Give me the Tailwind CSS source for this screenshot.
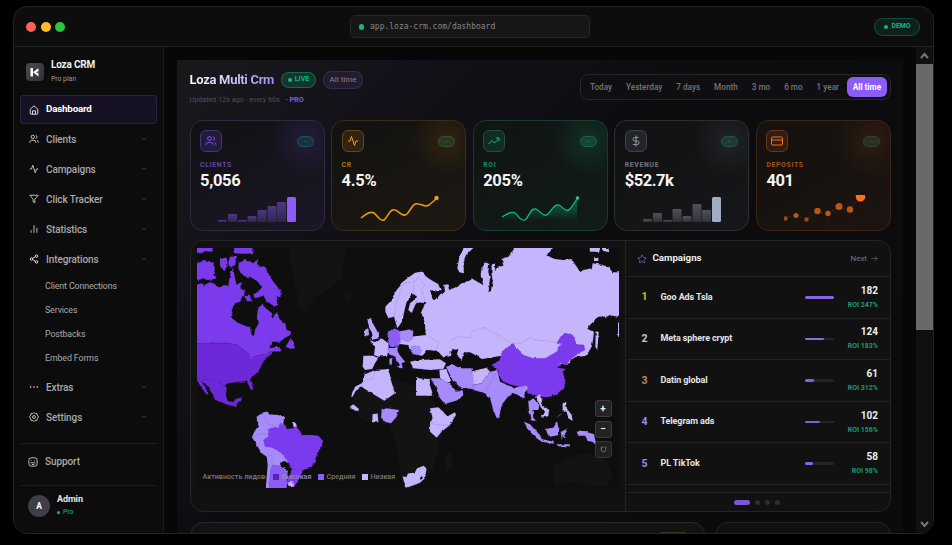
<!DOCTYPE html>
<html lang="en">
<head>
<meta charset="utf-8">
<title>Loza CRM</title>
<script src="https://cdn.jsdelivr.net/npm/@tailwindcss/browser@4"></script>
</head>
<body class="bg-black w-[952px] h-[545px] overflow-hidden pt-[6px] pl-[13px] font-['Roboto',sans-serif] text-white">
<svg class="hidden">
  <defs>
    <symbol id="down" viewBox="0 0 24 24"><path d="m5 8 7 7 7-7"/></symbol>
    <symbol id="up" viewBox="0 0 24 24"><path d="m5 16 7-7 7 7"/></symbol>
    <symbol id="users" viewBox="0 0 24 24"><path d="M16 21v-2a4 4 0 0 0-4-4H6a4 4 0 0 0-4 4v2M22 21v-2a4 4 0 0 0-3-3.87M16 3.13a4 4 0 0 1 0 7.75"/><circle cx="9" cy="7" r="4"/></symbol>
    <symbol id="pulse" viewBox="0 0 24 24"><path d="M22 12h-4l-3 9L9 3l-3 9H2"/></symbol>
  </defs>
</svg>
<div class="w-[921px] h-[528px] rounded-[14px] border border-[#232323] bg-[#0d0d0d] overflow-hidden flex flex-col">
  <header class="h-[40px] shrink-0 border-b border-[#222] flex items-center pl-[12px] pr-[13px]">
    <div class="flex gap-[4.5px] w-[324px]">
      <i class="size-[10px] rounded-full bg-[#ff5f57]"></i><i class="size-[10px] rounded-full bg-[#febc2e]"></i><i class="size-[10px] rounded-full bg-[#28c840]"></i>
    </div>
    <div class="w-[240px] h-[23px] rounded-[5px] border border-[#272727] bg-[#161616] flex items-center pl-[8px] gap-[6px]">
      <i class="w-[5px] h-[6px] rounded-full bg-[#10b981]"></i>
      <span class="font-['DejaVu_Sans_Mono',monospace] text-[8px] text-[#858585]">app.loza-crm.com/dashboard</span>
    </div>
    <div class="ml-auto w-[46px] h-[18px] rounded-full border border-[#10b981]/30 bg-[#10b981]/12 flex items-center justify-center gap-[4px] text-[6.8px] font-bold text-[#24b485]"><i class="size-[4px] rounded-full bg-[#10b981]"></i>DEMO</div>
  </header>
  <div class="flex flex-1 min-h-0">
    <aside class="w-[150px] shrink-0 border-r border-[#1b1b1b] bg-[#0c0c0c] px-[6px] flex flex-col text-[10px] tracking-[-.1px] font-medium text-[#a9a9ab]">
      <div class="h-[48px] flex items-center gap-[7px] pl-[6px] pt-[2px] shrink-0">
        <svg class="w-[18px] h-[18px]" viewBox="0 0 18 18"><defs><linearGradient id="lg" x1="0" y1="0" x2="1" y2="1"><stop stop-color="#4a4a4f"/><stop offset="1" stop-color="#303034"/></linearGradient></defs><rect width="18" height="18" rx="4" fill="url(#lg)"/><path d="M4.500 5h2.500v8.500H4.500zM12.500 5v8.500L7 9.200z" fill="#fff"/><path d="M10 9.200l2.500-1.200v2.400z" fill="#333"/></svg>
        <div><div class="text-[10px] leading-[14px] font-bold text-[#eee] tracking-[-.2px]">Loza CRM</div><div class="text-[7px] leading-[14px] font-normal text-[#9b9b9b]">Pro plan</div></div>
      </div>
      <nav class="flex flex-col shrink-0">
        <div class="h-[29px] rounded-[3px] border border-[#2b2145] bg-[#171223] flex items-center pl-[8px] gap-[7px] text-white font-bold text-[9.800px] tracking-[-.2px]"><svg class="size-[10px] fill-none stroke-current stroke-2" viewBox="0 0 24 24"><path d="M3 10 12 2l9 8v10a2 2 0 0 1-2 2H5a2 2 0 0 1-2-2zM8.500 22v-8h7v8"/></svg>Dashboard</div>
        <div class="h-[30px] flex items-center pl-[9px] pr-[10px] gap-[7px]"><svg class="size-[10px] fill-none stroke-[#ddd] stroke-2"><use href="#users"/></svg>Clients<svg class="size-[6px] ml-auto fill-none stroke-[#777] stroke-2"><use href="#down"/></svg></div>
        <div class="h-[30px] flex items-center pl-[9px] pr-[10px] gap-[7px]"><svg class="size-[10px] fill-none stroke-[#ddd] stroke-2"><use href="#pulse"/></svg>Campaigns<svg class="size-[6px] ml-auto fill-none stroke-[#777] stroke-2"><use href="#down"/></svg></div>
        <div class="h-[30px] flex items-center pl-[9px] pr-[10px] gap-[7px]"><svg class="size-[10px] fill-none stroke-[#ddd] stroke-2" viewBox="0 0 24 24"><path d="M22 3H2l8 9.460V19l4 2v-8.540z"/></svg>Click Tracker<svg class="size-[6px] ml-auto fill-none stroke-[#777] stroke-2"><use href="#down"/></svg></div>
        <div class="h-[30px] flex items-center pl-[9px] pr-[10px] gap-[7px]"><svg class="size-[10px] fill-none stroke-[#ddd] stroke-2" viewBox="0 0 24 24"><path d="M5 21v-6M12 21V3M19 21V9"/></svg>Statistics<svg class="size-[6px] ml-auto fill-none stroke-[#777] stroke-2"><use href="#down"/></svg></div>
        <div class="h-[30px] flex items-center pl-[9px] pr-[10px] gap-[7px]"><svg class="size-[10px] fill-none stroke-[#ddd] stroke-[2.4]" viewBox="0 0 24 24"><circle cx="18" cy="5" r="3"/><circle cx="6" cy="12" r="3"/><circle cx="18" cy="19" r="3"/><path d="m8.600 13.500 6.800 4M15.400 6.500l-6.800 4"/></svg>Integrations<svg class="size-[6px] ml-auto fill-none stroke-[#777] stroke-2"><use href="#up"/></svg></div>
        <div class="flex flex-col text-[8.800px] font-normal leading-[24px] pl-[25px] pb-[2px]"><span>Client Connections</span><span>Services</span><span>Postbacks</span><span>Embed Forms</span></div>
        <div class="h-[30px] flex items-center pl-[9px] pr-[10px] gap-[7px]"><svg class="size-[10px] fill-[#ddd]" viewBox="0 0 24 24"><circle cx="4" cy="12" r="2"/><circle cx="12" cy="12" r="2"/><circle cx="20" cy="12" r="2"/></svg>Extras<svg class="size-[6px] ml-auto fill-none stroke-[#777] stroke-2"><use href="#down"/></svg></div>
        <div class="h-[30px] flex items-center pl-[9px] pr-[10px] gap-[7px]"><svg class="size-[10px] fill-none stroke-[#ddd] stroke-2" viewBox="0 0 24 24"><circle cx="12" cy="12" r="3.500"/><path d="m12 1 3 3 4-.5.7 4L23 12l-3.300 4.500-.7 4-4-.5-3 3-3-3-4 .5-.7-4L1 12l3.300-4.500.7-4 4 .5z"/></svg>Settings<svg class="size-[6px] ml-auto fill-none stroke-[#777] stroke-2"><use href="#down"/></svg></div>
      </nav>
      <div class="mt-[11px] h-[43px] shrink-0 border-y border-[#1b1b1b] flex items-center pl-[8px] gap-[7px] pb-[6px]"><svg class="size-[10px] fill-none stroke-[#ddd] stroke-2" viewBox="0 0 24 24"><rect x="2" y="2" width="20" height="20" rx="6"/><path d="M8 8v2M16 8v2M6 14h12M9 18h6"/></svg>Support</div>
      <div class="flex items-center gap-[7px] pl-[8px] pt-[7px]"><div class="size-[22px] rounded-full bg-[#3f3d46] flex items-center justify-center text-[8.500px] font-bold text-white">A</div><div class="pb-px"><div class="text-[9px] leading-[13px] font-bold text-[#e5e5e5]">Admin</div><div class="text-[7px] leading-[12px] font-normal text-[#10b981] flex items-center gap-[3px]"><i class="size-[3px] rounded-full bg-[#10b981]"></i>Pro</div></div></div>
    </aside>
    <main class="flex-1 bg-[#070707] pl-[13px] pt-[13px] min-w-0 flex">
      <div class="w-[726px] shrink-0 pl-[12.500px] pr-[12px] pt-[9px] bg-[linear-gradient(135deg,#19191c_0%,#13121a_20%,#0c0c0f_45%,#0b0b0d_100%)]">
        <div class="flex justify-between h-[51px]">
          <div>
            <div class="flex items-center h-[21px]">
              <h1 class="w-[91.500px] whitespace-nowrap text-[13px] tracking-[-.3px] font-bold"><span class="bg-gradient-to-r from-white to-[#a78bfa] bg-clip-text text-transparent">Loza Multi Crm</span></h1>
              <div class="w-[35px] h-[16px] rounded-full border border-[#10b981]/40 bg-[#10b981]/20 flex items-center justify-center gap-[3px] text-[7px] font-bold text-[#10b981]"><i class="size-[4px] rounded-full bg-[#10b981]"></i>LIVE</div>
              <div class="ml-[7px] w-[40px] h-[18px] rounded-[8px] border border-[#332d48] bg-[#211d2e] flex items-center justify-center text-[8px] text-[#85828e]">All time</div>
            </div>
            <div class="text-[7.200px] leading-[11px] mt-[4px] text-[#505055] flex"><span class="w-[96px] whitespace-nowrap">Updated 12s ago · every 60s</span><span class="text-[#7c5af0] font-bold">· PRO</span></div>
          </div>
          <div class="mt-[5px] h-[26px] w-[311px] rounded-[8px] border border-[#27272a] bg-[#0f0f11] flex items-center pl-[9px] pr-[3px] justify-between text-[8.200px] font-medium text-[#747478]">
            <span>Today</span><span>Yesterday</span><span>7 days</span><span>Month</span><span>3 mo</span><span>6 mo</span><span>1 year</span><span class="w-[40px] h-[20px] -ml-[6px] rounded-[6px] bg-[#8b5cf6] text-white font-bold flex items-center justify-center">All time</span>
          </div>
        </div>
        <section class="grid grid-cols-5 gap-[6.500px] h-[111px]">
          <div class="overflow-hidden rounded-[13px] border border-[#302940] bg-[radial-gradient(circle_at_86%_18%,#231d3a_0,transparent_24%),linear-gradient(150deg,#111114,#1b1726)] pl-[9.500px] pt-[9px] flex flex-col">
            <div class="flex items-center"><div class="size-[22px] rounded-[6px] border border-[#45366f] bg-[#231a3d] flex items-center justify-center"><svg class="size-[12px] fill-none stroke-[#8b5cf6] stroke-[1.700]"><use href="#users"/></svg></div><div class="ml-auto mr-[10px] w-[17px] h-[11px] rounded-full border border-[#235461] bg-[#19313f] flex items-center justify-center"><svg class="size-[5px] fill-none stroke-[#3f947f] stroke-2"><use href="#up"/></svg></div></div>
            <div class="mt-[8px] text-[6.800px] leading-[10px] font-bold tracking-[.7px] text-[#69479f]">CLIENTS</div><div class="text-[16.500px] leading-[22px] tracking-[-.3px] font-bold text-[#f4f4f5]">5,056</div>
            <svg class="w-[90px] h-[28px] ml-[18px] mt-[3px]" viewBox="0 0 90 28"><defs><linearGradient id="pb" x2="0" y2="1"><stop stop-color="#4e3786"/><stop offset="1" stop-color="#30244f"/></linearGradient></defs><g fill="url(#pb)"><rect x="0" y="25" width="9" height="2" rx="1"/><rect x="10" y="19" width="9" height="8" rx="1"/><rect x="20" y="25" width="9" height="2" rx="1"/><rect x="29.500" y="21" width="9" height="6" rx="1"/><rect x="39.500" y="15" width="9" height="12" rx="1"/><rect x="49.500" y="11" width="9" height="16" rx="1"/><rect x="59" y="7" width="9" height="20" rx="1"/></g><rect x="69" y="2" width="9" height="25" rx="1.500" fill="#8b5cf6"/></svg>
          </div>
          <div class="overflow-hidden rounded-[13px] border border-[#3b2c14] bg-[radial-gradient(circle_at_86%_18%,#30220f_0,transparent_24%),linear-gradient(150deg,#131211,#1d1812)] pl-[9.500px] pt-[9px] flex flex-col">
            <div class="flex items-center"><div class="size-[22px] rounded-[6px] border border-[#66471b] bg-[#302313] flex items-center justify-center"><svg class="size-[12px] fill-none stroke-[#f5a21b] stroke-2"><use href="#pulse"/></svg></div><div class="ml-auto mr-[10px] w-[17px] h-[11px] rounded-full border border-[#365333] bg-[#2b371f] flex items-center justify-center"><svg class="size-[5px] fill-none stroke-[#569058] stroke-2"><use href="#up"/></svg></div></div>
            <div class="mt-[8px] text-[6.800px] leading-[10px] font-bold tracking-[.7px] text-[#ad750e]">CR</div><div class="text-[16.500px] leading-[22px] tracking-[-.3px] font-bold text-[#f4f4f5]">4.5%</div>
            <svg class="w-[90px] h-[30px] ml-[18px] mt-[1px] fill-none" viewBox="0 0 90 30"><path d="M1 25C6 21 10 18 14 20 17 22 20 29 24 27 28 24 30 15 35 17 39 18 43 25 47 21 51 17 53 9 58 11 62 11 65 15 69 12L76 6" stroke="#e9980e" stroke-width="1.600"/><circle cx="76.500" cy="5" r="2.200" fill="#f59e0b"/></svg>
          </div>
          <div class="overflow-hidden rounded-[13px] border border-[#163d30] bg-[radial-gradient(circle_at_86%_18%,#103126_0,transparent_24%),linear-gradient(150deg,#101412,#111c18)] pl-[9.500px] pt-[9px] flex flex-col">
            <div class="flex items-center"><div class="size-[22px] rounded-[6px] border border-[#1b513f] bg-[#122c24] flex items-center justify-center"><svg class="size-[12px] fill-none stroke-[#19b981] stroke-2" viewBox="0 0 24 24"><path d="m1 18 7-7 5 5 9-9M16 6h6v6"/></svg></div><div class="ml-auto mr-[10px] w-[17px] h-[11px] rounded-full border border-[#1a6349] bg-[#144533] flex items-center justify-center"><svg class="size-[5px] fill-none stroke-[#2cbb86] stroke-2"><use href="#up"/></svg></div></div>
            <div class="mt-[8px] text-[6.800px] leading-[10px] font-bold tracking-[.7px] text-[#128f67]">ROI</div><div class="text-[16.500px] leading-[22px] tracking-[-.3px] font-bold text-[#f4f4f5]">205%</div>
            <svg class="w-[90px] h-[30px] ml-[18px] mt-[1px] fill-none" viewBox="0 0 90 30"><defs><linearGradient id="ga" x2="0" y2="1"><stop stop-color="#10b981" stop-opacity=".5"/><stop offset="1" stop-color="#10b981" stop-opacity="0"/></linearGradient></defs><path d="M1 24C6 21 10 18 14 20 17 22 20 29 24 27 28 24 30 14 35 16 39 18 43 25 47 21 51 17 53 11 58 12 62 14 65 20 69 16L76 6V28H1Z" fill="url(#ga)"/><path d="M1 24C6 21 10 18 14 20 17 22 20 29 24 27 28 24 30 14 35 16 39 18 43 25 47 21 51 17 53 11 58 12 62 14 65 20 69 16L76 6" stroke="#16b981" stroke-width="1.200"/><circle cx="76.500" cy="5" r="1.800" fill="#24cf94"/></svg>
          </div>
          <div class="overflow-hidden rounded-[13px] border border-[#2c2e31] bg-[radial-gradient(circle_at_86%_18%,#202327_0,transparent_24%),linear-gradient(150deg,#111113,#16171a)] pl-[9.500px] pt-[9px] flex flex-col">
            <div class="flex items-center"><div class="size-[22px] rounded-[6px] border border-[#3e4147] bg-[#222429] flex items-center justify-center"><svg class="size-[12px] fill-none stroke-[#8e96a5] stroke-2" viewBox="0 0 24 24"><path d="M12 1v22M17 5H9.500a3.500 3.500 0 0 0 0 7h5a3.500 3.500 0 0 1 0 7H6"/></svg></div><div class="ml-auto mr-[10px] w-[17px] h-[11px] rounded-full border border-[#25543f] bg-[#203a31] flex items-center justify-center"><svg class="size-[5px] fill-none stroke-[#48a57d] stroke-2"><use href="#up"/></svg></div></div>
            <div class="mt-[8px] text-[6.800px] leading-[10px] font-bold tracking-[.7px] text-[#737984]">REVENUE</div><div class="text-[16.500px] leading-[22px] tracking-[-.5px] font-bold text-[#f4f4f5]">$52.7k</div>
            <svg class="w-[90px] h-[28px] ml-[18px] mt-[3px]" viewBox="0 0 90 28"><defs><linearGradient id="gb" x2="0" y2="1"><stop stop-color="#505259"/><stop offset="1" stop-color="#303238"/></linearGradient></defs><g fill="url(#gb)"><rect x="0" y="24" width="9" height="3" rx="1"/><rect x="10" y="18" width="9" height="9" rx="1"/><rect x="20" y="25" width="9" height="2" rx="1"/><rect x="29.500" y="14" width="9" height="13" rx="1"/><rect x="39.500" y="21" width="9" height="6" rx="1"/><rect x="49.500" y="9" width="9" height="18" rx="1"/><rect x="59" y="15" width="9" height="12" rx="1"/></g><rect x="69" y="2" width="9" height="25" rx="1.500" fill="#a1acc2"/></svg>
          </div>
          <div class="overflow-hidden rounded-[13px] border border-[#3a2517] bg-[radial-gradient(circle_at_86%_18%,#2e1c10_0,transparent_24%),linear-gradient(150deg,#14110f,#1c1410)] pl-[9.500px] pt-[9px] flex flex-col">
            <div class="flex items-center"><div class="size-[22px] rounded-[6px] border border-[#6b3717] bg-[#301c10] flex items-center justify-center"><svg class="size-[12px] fill-none stroke-[#f97316] stroke-2" viewBox="0 0 24 24"><rect x="1" y="4" width="22" height="16" rx="2"/><path d="M1 10h22"/></svg></div><div class="ml-auto mr-[10px] w-[17px] h-[11px] rounded-full border border-[#37432f] bg-[#29301f] flex items-center justify-center"><svg class="size-[5px] fill-none stroke-[#568850] stroke-2"><use href="#up"/></svg></div></div>
            <div class="mt-[8px] text-[6.800px] leading-[10px] font-bold tracking-[.7px] text-[#aa5114]">DEPOSITS</div><div class="text-[16.500px] leading-[22px] tracking-[-.4px] font-bold text-[#f4f4f5]">401</div>
            <svg class="w-[90px] h-[28px] ml-[18px] mt-[3px]" viewBox="0 0 90 28"><path d="M1 23 12 20 22 24 33 16 43 19 54 12 65 15 76 3" fill="none" stroke="#6c3516" stroke-width=".6" stroke-dasharray="2 2"/><g fill="#b85816"><circle cx="1.500" cy="23.500" r="2.200" opacity=".8"/><circle cx="12" cy="20.500" r="2.500"/><circle cx="22.500" cy="24.500" r="2.200" opacity=".8"/><circle cx="33.500" cy="16" r="3.200"/><circle cx="44" cy="18.500" r="2.700"/><circle cx="55" cy="11.500" r="3.500"/><circle cx="66" cy="14.500" r="3.200"/></g><path d="M72 0h9q1 3-1 5-3 3-6.500.4Q71 3 72 0Z" fill="#f97316"/></svg>
          </div>
        </section>
        <section class="mt-[9px] h-[272px] rounded-[13px] border border-[#242426] bg-[#111112] flex overflow-hidden">
          <div class="relative w-[435px] shrink-0 pt-[7px] pl-[6px] border-r border-[#222224]">
            <svg class="w-[422px] h-[240px]" viewBox="197 248 422 240">
              <defs><filter id="coast" x="0" y="0" width="1" height="1" filterUnits="objectBoundingBox" color-interpolation-filters="sRGB"><feTurbulence type="fractalNoise" baseFrequency=".2" numOctaves="2" seed="4" result="n"/><feDisplacementMap in="SourceGraphic" in2="n" scale="2.800" xChannelSelector="R" yChannelSelector="G"/></filter></defs>
              <rect x="197" y="248" width="422" height="240" fill="#0e0e0f"/>
              <g fill="#131314">
                <path transform="translate(185 235) scale(.33333)" d="M310 39H485L470 130 420 170 385 190 365 235 345 220 330 150ZM470 175 495 165 510 185 485 200Z"/>
                <path transform="translate(390 235) scale(.33333)" d="M-90 450 0 430 70 450 125 490 165 560 145 640 130 700 60 745 35 740 20 640 0 570-80 560-120 510ZM165 660 190 650 185 700 165 710ZM490 690 520 675 560 660 620 655 650 680 670 720 650 755 590 750 550 740 495 755Z"/>
              </g>
              <g stroke="#5b3aa6" stroke-opacity=".7" stroke-width=".7" stroke-linejoin="round" filter="url(#coast)">
                <g transform="translate(185 235) scale(.33333)">
                  <path fill="#7c3aed" d="M20 153 50 145 58 150 75 142 88 146 100 155 115 150 130 152 135 120 144 100 150 130 155 150 172 138 165 160 180 165 176 185 165 200 150 205 140 225 138 245 155 262 180 272 195 278 200 300 207 303 210 285 218 270 216 245 218 225 230 208 245 222 258 232 262 248 275 232 285 255 300 265 305 285 318 290 316 300 300 308 285 320 265 320 252 335 258 340 275 333 290 345 270 352 258 348 240 358 215 362 195 372 190 355 170 340 155 330 130 325 20 325ZM302 335 312 318 318 308 325 325 330 340 318 342ZM20 30H85L80 50 60 48 50 55 20 52ZM145 30H205V55L180 56 150 55ZM20 85 60 75 85 85 90 110 85 120 95 130 70 135 55 130 40 135 20 130ZM105 70 125 68 128 90 118 108 105 95ZM135 65 155 65 150 90 135 98 130 85ZM162 80 180 72 205 85 220 75 215 90 240 95 255 125 265 140 285 165 288 180 275 185 280 205 268 215 255 205 245 200 235 180 225 185 210 190 205 178 220 170 232 155 215 140 200 125 185 125 170 120 160 100ZM178 185 190 178 202 200 185 198Z"/>
                  <path fill="#6d28d9" d="M20 325H130L155 330 170 340 190 355 195 372 215 362 240 358 258 348 262 355 245 368 235 380 228 395 222 405 215 415 200 425 195 435 205 460 198 465 190 448 185 438 160 440 130 445 118 452 105 445 85 435 20 430Z"/>
                  <path fill="#6d28d9" d="M36 430 50 432 85 435 105 445 118 452 125 460 122 480 128 498 145 502 155 488 172 485 168 498 155 505 155 515 130 510 110 502 90 495 85 480 75 465 60 445 50 438 70 475 66 480 50 460 36 435Z"/>
                  <path fill="#a78bfa" d="M215 545 235 532 245 530 250 538 280 540 297 545 295 570 300 640 310 690 300 790H240L248 690 245 665 230 655 215 630 200 605 208 590 218 575Z"/>
                  <path fill="#c4b5fd" stroke="none" d="M323 562 333 562 336 577 326 577Z"/>
                  <path fill="#7c3aed" d="M250 582 270 575 280 580 285 565 300 570 305 582 325 580 335 572 345 590 350 600 370 600 400 602 414 615 410 635 395 655 392 680 380 695 355 705 345 725 328 755 305 740 318 712 322 700 310 690 300 668 285 650 258 637 240 635 235 615 250 605Z"/>
                  <path fill="#8b5cf6" d="M262 690 285 692 305 712 305 790H250L256 705Z"/>
                  <path fill="#0e0e0f" stroke="none" d="M285 685 300 678 320 695 318 712 300 702 288 695Z"/>
                  <path fill="#c4b5fd" d="M307 740 325 738 327 755 312 756Z"/>
                  <path fill="none" d="M240 545 245 565 265 570 262 582M202 605 230 595 250 598M245 665 260 660 262 690"/>
                  <path fill="#b8a4fc" stroke="none" d="M547 255 558 248 562 262 572 280 582 300 582 310 555 316 563 300 555 285ZM540 285 550 278 552 300 538 305Z"/>
                  <path fill="#c4b5fd" d="M555 320 575 320 590 310 610 325 612 345 605 362 580 365 567 360 570 335ZM535 362 565 362 580 370 570 385 562 402 540 405 533 395ZM535 420 570 405 612 402 616 430 630 475 598 497 560 475 530 455 512 468 503 485 498 485 510 455 530 445ZM495 515 505 508 522 522 520 528 498 525ZM562 538 578 535 580 562 563 562Z"/>
                  <path fill="#8b5cf6" d="M608 295 625 280 645 288 648 325 635 335 612 330Z"/>
                  <path fill="#a78bfa" d="M608 340 635 337 640 355 660 380 650 385 653 400 635 398 645 390 628 365 612 358ZM613 372 622 368 620 390 613 388ZM590 525 605 520 642 525 635 545 618 565 598 560 588 550Z"/>
                  <path fill="none" d="M570 405 565 430 535 440 530 455"/>
                </g>
                <g transform="translate(390 235) scale(.33333)">
                  <path fill="#c4b5fd" d="M-14 215 0 200 20 165 45 135 75 113 95 110 115 130 145 148 152 165 145 172 120 165 128 185 140 190 150 178 165 170 162 150 172 148 178 165 200 155 215 145 240 140 245 130 262 140 280 150 272 120 275 95 285 82 298 85 295 110 300 130 297 160 295 172 303 165 308 140 304 110 305 92 315 85 315 105 325 95 340 92 335 72 355 65 370 45 375 25H500L470 62 495 72 520 75 545 72 560 95 570 112 580 105 605 100 608 85 640 90 655 95 668 112 705 112V230L680 245 660 240 650 245 625 245 600 270 592 282 612 290 610 310 605 335 590 360 575 370 500 400 330 400 335 362 300 368 275 372 265 365 240 352 222 352 215 375 200 360 205 342 190 345 178 350 185 362 160 368 145 350 120 345 110 360 95 362 70 358 50 330 20 325 25 312 60 305 90 302 108 300 98 270 90 240 105 205 80 200 65 235 45 240 35 262 22 280 12 245-5 250-14 230Z"/>
                  <path fill="#0e0e0f" stroke="none" d="M65 177 78 180 75 193 60 205 55 225 70 238 95 235 105 265 106 300 75 300 45 282 38 255 45 220 50 200ZM122 170 150 176 142 190 130 196ZM70 355 95 365 112 345 145 352 165 372 95 378 68 372Z"/>
                  <path fill="#c4b5fd" stroke="none" d="M202 100 208 65 225 30 250 39 228 60 220 85 222 115 208 112ZM598 30H632L628 50 600 50ZM635 35 655 40 658 52 640 48ZM612 70 625 68 625 78 612 78ZM617 285 626 292 622 345 616 335ZM684 262 705 270 705 305 684 305Z"/>
                  <path fill="#c4b5fd" d="M60 380 85 375 150 373 168 385 160 402 120 405 90 402 70 400ZM78 430 120 432 118 445 130 482 78 482ZM148 405 168 402 185 440 165 445 150 425ZM240 410 290 398 300 410 275 445 250 450ZM120 520 145 517 160 530 170 545 195 532 198 540 180 570 155 590 140 608 120 590 120 565 128 550ZM38 725 50 725 55 712 75 715 82 700 100 692 110 700 105 730 88 745 50 758 42 740Z"/>
                  <path fill="#0e0e0f" stroke="none" d="M88 727 95 722 99 729 92 735Z"/>
                  <path fill="#a78bfa" d="M28 290 55 283 70 288 68 312 55 320 28 312ZM62 335 85 330 95 345 88 360 70 358ZM168 395 185 390 215 400 245 400 250 445 250 463 215 458 190 440ZM122 430 150 430 180 447 200 470 218 465 220 480 205 495 165 507 150 490 138 460ZM250 450 275 445 300 410 322 405 330 440 365 455 372 460 405 448 420 458 405 475 398 495 385 480 370 475 350 490 335 510 328 545 320 550 310 525 300 490 285 475 250 465Z"/>
                  <path fill="#8b5cf6" stroke="none" d="M-7 295 10 280 28 288 32 320 18 335-4 330Z"/>
                  <path fill="#7c3aed" d="M370 325 383 345 400 360 430 370 465 370 500 350 505 335 515 330 500 325 515 300 530 292 548 300 560 328 582 330 585 345 560 360 540 375 525 395 508 385 512 395 530 400 518 410 527 440 520 460 500 478 480 485 465 487 450 483 435 480 415 475 412 450 390 455 365 450 340 440 325 420 325 405 305 390 330 375 335 350 355 335Z"/>
                  <path fill="#0e0e0f" stroke="none" d="M500 396 520 388 534 394 528 402 508 400ZM540 378 556 366 592 362 580 376 560 400 542 398Z"/>
                  <path fill="#a78bfa" stroke="none" d="M415 500 430 490 448 510 445 525 428 525 430 548 440 560 425 555 417 525ZM402 560 420 568 450 600 455 612 490 620 492 626 455 620 440 610 415 585ZM465 582 490 578 500 562 508 580 505 600 485 605 468 595ZM512 590 530 582 525 595 528 610 518 600 515 612ZM500 628 540 628 538 634 502 634ZM560 590 580 588 612 598 618 625 595 618 585 602 565 602Z"/>
                  <path fill="#c4b5fd" stroke="none" d="M435 485 450 478 460 495 455 510 478 525 475 540 455 548 465 530 448 508ZM518 505 528 500 530 520 545 540 548 558 535 550 530 530 518 525ZM508 540 500 550 515 535Z"/>
                  <path fill="none" d="M15 270C5 230 25 180 42 145L75 140 85 125 105 150 95 165 108 205M70 140 72 180M180 318 205 305 240 308 245 290 280 277 300 290 330 300 350 318 370 325 400 322 418 305 435 315 470 318 500 322M108 300 145 322 140 345M120 565 150 570 180 570M290 398 315 420 285 470"/>
                </g>
              </g>
            </svg>
            <div class="absolute left-[12px] top-[231px] flex items-center text-[7.200px] leading-[10px] font-medium text-[#77777b] whitespace-nowrap"><span class="w-[70px]">Активность лидов</span><i class="size-[6px] bg-[#5b21b6] mr-[3px]"></i><span class="w-[36px] text-[#9a86c4]">Высокая</span><i class="size-[6px] bg-[#8b5cf6] mr-[3px]"></i><span class="w-[35px]">Средняя</span><i class="size-[6px] bg-[#c4b5fd] mr-[3px]"></i><span>Низкая</span></div>
            <div class="absolute left-[404px] top-[159px] flex flex-col gap-[3.500px] text-[10px] font-bold text-[#eee]"><span class="size-[17px] rounded-[3px] border border-[#3d3d3f] bg-[#232324] flex items-center justify-center pb-px">+</span><span class="size-[17px] rounded-[3px] border border-[#3d3d3f] bg-[#232324] flex items-center justify-center pb-px">−</span><span class="size-[17px] rounded-[3px] border border-[#353537] bg-[#202021] flex items-center justify-center text-[#77777b]"><svg class="size-[7px] fill-none stroke-current stroke-[3]" viewBox="0 0 24 24"><path d="M11 4H4v7M5 5v8q0 7 7 7t8-7V4h-5"/></svg></span></div>
          </div>
          <div class="flex-1 flex flex-col">
            <div class="h-[36px] shrink-0 border-b border-[#222224] flex items-center pl-[11px] pr-[12px] text-[9.700px] font-bold text-[#eee]"><svg class="size-[10px] mr-[6px] fill-none stroke-[#7554c8] stroke-2" viewBox="0 0 24 24"><path d="m12 2 3.100 6.300 6.900 1-5 4.900 1.200 6.900-6.200-3.300-6.200 3.300L7 14.200 2 9.300l6.900-1z"/></svg>Campaigns<span class="ml-auto text-[8px] font-normal text-[#747478] mr-[4px]">Next</span><svg class="size-[7px] fill-none stroke-[#747478] stroke-2" viewBox="0 0 24 24"><path d="M1 12h21M14 4l8 8-8 8"/></svg></div>
            <div class="h-[41.600px] shrink-0 border-b border-[#222224] flex items-center pr-[12px]"><b class="w-[35px] pl-[16px] text-[10.500px] text-[#d6b932]">1</b><span class="w-[144px] text-[9px] tracking-[-.1px] font-bold text-[#e4e4e5]">Goo Ads Tsla</span><i class="w-[29px] h-[3px] rounded-full bg-[#242425]"><i class="block h-full w-full rounded-full bg-[#8b63e8]"></i></i><div class="ml-auto text-right"><div class="text-[10px] leading-[15px] font-bold text-[#eee]">182</div><div class="text-[7px] leading-[14px] font-bold text-[#159c70]">ROI 247%</div></div></div>
            <div class="h-[41.600px] shrink-0 border-b border-[#222224] flex items-center pr-[12px]"><b class="w-[35px] pl-[16px] text-[10.500px] text-[#c6c7ca]">2</b><span class="w-[144px] text-[9px] tracking-[-.1px] font-bold text-[#e4e4e5]">Meta sphere crypt</span><i class="w-[29px] h-[2px] rounded-full bg-[#242425]"><i class="block h-full w-[66%] rounded-full bg-[#8b6bee]"></i></i><div class="ml-auto text-right"><div class="text-[10px] leading-[15px] font-bold text-[#eee]">124</div><div class="text-[7px] leading-[14px] font-bold text-[#159c70]">ROI 183%</div></div></div>
            <div class="h-[41.600px] shrink-0 border-b border-[#222224] flex items-center pr-[12px]"><b class="w-[35px] pl-[16px] text-[10.500px] text-[#c48657]">3</b><span class="w-[144px] text-[9px] tracking-[-.1px] font-bold text-[#e4e4e5]">Datin global</span><i class="w-[29px] h-[3px] rounded-full bg-[#242425]"><i class="block h-full w-[34%] rounded-full bg-[#7c68d8]"></i></i><div class="ml-auto text-right"><div class="text-[10px] leading-[15px] font-bold text-[#eee]">61</div><div class="text-[7px] leading-[14px] font-bold text-[#159c70]">ROI 312%</div></div></div>
            <div class="h-[41.600px] shrink-0 border-b border-[#222224] flex items-center pr-[12px]"><b class="w-[35px] pl-[16px] text-[10.500px] text-[#9e89ec]">4</b><span class="w-[144px] text-[9px] tracking-[-.1px] font-bold text-[#e4e4e5]">Telegram ads</span><i class="w-[29px] h-[2px] rounded-full bg-[#242425]"><i class="block h-full w-[55%] rounded-full bg-[#7c62d8]"></i></i><div class="ml-auto text-right"><div class="text-[10px] leading-[15px] font-bold text-[#eee]">102</div><div class="text-[7px] leading-[14px] font-bold text-[#159c70]">ROI 156%</div></div></div>
            <div class="h-[41.600px] shrink-0 border-b border-[#222224] flex items-center pr-[12px]"><b class="w-[35px] pl-[16px] text-[10.500px] text-[#9e89ec]">5</b><span class="w-[144px] text-[9px] tracking-[-.1px] font-bold text-[#e4e4e5]">PL TikTok</span><i class="w-[29px] h-[3px] rounded-full bg-[#242425]"><i class="block h-full w-[31%] rounded-full bg-[#8565e8]"></i></i><div class="ml-auto text-right"><div class="text-[10px] leading-[15px] font-bold text-[#eee]">58</div><div class="text-[7px] leading-[14px] font-bold text-[#159c70]">ROI 98%</div></div></div>
            <div class="mt-auto h-[19px] border-t border-[#222224] flex items-center justify-center gap-[5px] pr-[1px]"><i class="w-[16px] h-[5px] rounded-full bg-[#7c58d8]"></i><i class="size-[5px] rounded-full bg-[#2d2d2f]"></i><i class="size-[5px] rounded-full bg-[#2d2d2f]"></i><i class="size-[5px] rounded-full bg-[#2d2d2f]"></i></div>
          </div>
        </section>
        <section class="mt-[10px] flex gap-[10px]"><div class="w-[515px] h-[40px] rounded-[13px] border border-[#29292b] bg-[#121213] pt-[9px]"><i class="block ml-auto mr-[16px] w-[30px] h-[12px] rounded-[4px] border border-[#40361a] bg-[#2d260f]"></i></div><div class="flex-1 h-[40px] rounded-[13px] border border-[#242426] bg-[#111112]"></div></section>
      </div>
      <div class="ml-auto -mt-[13px] w-[17px] bg-[#101010] flex flex-col items-center">
        <svg class="w-[9px] h-[17px] shrink-0 fill-none stroke-[#777] stroke-[2]" viewBox="0 0 9 17"><path d="m1 11 3.500-4L8 11"/></svg>
        <div class="w-full h-[266px] bg-[#69696b]"></div>
        <svg class="w-[9px] h-[17px] mt-auto shrink-0 fill-none stroke-[#777] stroke-[2]" viewBox="0 0 9 17"><path d="m1 6 3.500 4L8 6"/></svg>
      </div>
    </main>
  </div>
</div>
</body>
</html>
